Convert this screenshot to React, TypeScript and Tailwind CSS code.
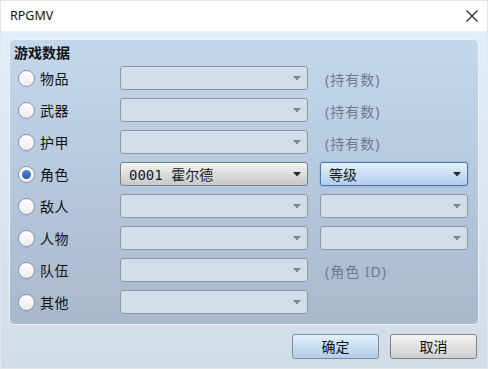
import React from 'react';

type Row = {
  label: string;
  checked?: boolean;
  main?: string;
  side?: 'note' | 'combo' | 'active' | 'none';
  note?: string;
};

const rows: Row[] = [
  { label: '物品', side: 'note', note: '(持有数)' },
  { label: '武器', side: 'note', note: '(持有数)' },
  { label: '护甲', side: 'note', note: '(持有数)' },
  { label: '角色', checked: true, main: '0001 霍尔德', side: 'active' },
  { label: '敌人', side: 'combo' },
  { label: '人物', side: 'combo' },
  { label: '队伍', side: 'note', note: '(角色 ID)' },
  { label: '其他', side: 'none' },
];

const Arrow = ({ dark }: { dark?: boolean }) => (
  <svg width="8" height="5" viewBox="0 0 8 5" className="shrink-0">
    <path d="M0 0 H8 L4 4.5 Z" fill={dark ? '#2a2a2a' : '#7d858e'} />
  </svg>
);

const Radio = ({ checked }: { checked?: boolean }) => (
  <span className="flex h-[17px] w-[17px] shrink-0 items-center justify-center rounded-full border border-[#8a8f96] bg-gradient-to-b from-white to-[#e9ecef] shadow-[inset_0_0_1px_#fff]">
    {checked && <span className="h-[9px] w-[9px] rounded-full bg-gradient-to-b from-[#5a86d0] to-[#2f56a6]" />}
  </span>
);

const Combo = ({ width, text, variant }: { width: string; text?: string; variant: 'off' | 'on' | 'focus' }) => {
  const look =
    variant === 'off'
      ? 'border-[#8e979f] bg-[#d3dde7]'
      : variant === 'on'
        ? 'border-[#7c7f83] bg-gradient-to-b from-[#f3f3f3] to-[#c6c8ca]'
        : 'border-[#4f76aa] bg-gradient-to-b from-[#e6f1fc] to-[#b1cdec] shadow-[0_0_0_1px_#9dbbe0]';
  return (
    <div className={`flex h-[24px] ${width} shrink-0 items-center justify-between rounded-[3px] border pl-[8px] pr-[6px] ${look}`}>
      <span className="translate-y-[1px] text-[14px] leading-none text-[#1b1b1b]" style={{ fontFamily: text && text.startsWith('0') ? '"DejaVu Sans Mono", "Noto Sans CJK SC", monospace' : undefined }}>
        {text}
      </span>
      <Arrow dark={variant !== 'off'} />
    </div>
  );
};

export default function App() {
  return (
    <div className="flex h-[369px] w-[488px] flex-col overflow-hidden border border-[#e2e6ea] font-['Noto_Sans','Noto_Sans_CJK_SC',sans-serif]">
      <div className="flex h-[30px] shrink-0 items-center justify-between bg-white pl-[9px] pr-[9px]">
        <span className="text-[12.5px] text-[#111]">RPGMV</span>
        <svg width="12" height="12" viewBox="0 0 12 12">
          <path d="M0.5 0.5 L11.5 11.5 M11.5 0.5 L0.5 11.5" stroke="#222" strokeWidth="1.1" />
        </svg>
      </div>
      <div className="flex flex-1 flex-col bg-gradient-to-b from-[#e2edfa] to-[#d2dce7] px-[8px] pt-[8px]">
        <div className="flex h-[286px] flex-col rounded-[5px] border border-[#edf3fa] bg-gradient-to-b from-[#c4d7ed] to-[#a8b9ce] pl-[8px] pt-[3px]">
          <div className="-ml-[4px] h-[20px] text-[14px] font-bold leading-[20px] text-[#111]">游戏数据</div>
          <div className="mt-[3px] flex flex-col gap-[8px]">
            {rows.map((r) => (
              <div key={r.label} className="flex h-[24px] items-center">
                <div className="flex w-[102px] items-center gap-[5px]">
                  <Radio checked={r.checked} />
                  <span className="translate-y-[1px] text-[14px] leading-none tracking-[0.5px] text-[#111]">{r.label}</span>
                </div>
                <Combo width="w-[188px]" text={r.main} variant={r.checked ? 'on' : 'off'} />
                <div className="ml-[12px] flex items-center">
                  {r.side === 'note' && (
                    <span className="translate-y-[1px] pl-[5px] text-[14px] tracking-[1px] text-[#6c7a8c]">{r.note}</span>
                  )}
                  {r.side === 'combo' && <Combo width="w-[148px]" variant="off" />}
                  {r.side === 'active' && <Combo width="w-[148px]" text="等级" variant="focus" />}
                </div>
              </div>
            ))}
          </div>
        </div>
        <div className="mt-[9px] flex justify-end gap-[11px] pr-[2px]">
          <button className="h-[25px] w-[87px] rounded-[3px] border border-[#7b8da4] bg-gradient-to-b from-[#e3f0fc] to-[#b2cdea] text-[14px] text-[#111]">
            确定
          </button>
          <button className="h-[25px] w-[87px] rounded-[3px] border border-[#7d7f82] bg-gradient-to-b from-[#f5f5f5] to-[#cdcfd1] text-[14px] text-[#111]">
            取消
          </button>
        </div>
      </div>
    </div>
  );
}
